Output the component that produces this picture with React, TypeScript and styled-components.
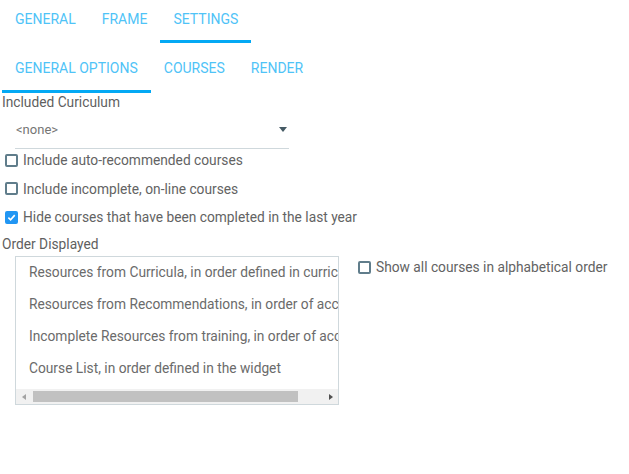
import React from "react";
import styled, { createGlobalStyle } from "styled-components";

const Global = createGlobalStyle`
  html, body { margin: 0; padding: 0; background: #ffffff; }
  body { font-family: Roboto, "Liberation Sans", Arial, sans-serif; }
  * { box-sizing: border-box; }
`;

const Page = styled.div`
  width: 629px;
  height: 474px;
  padding-left: 2px;
  overflow: hidden;
`;

const TabBar = styled.div<{ $h: number }>`
  display: flex;
  height: ${(p) => p.$h}px;
  align-items: stretch;
`;

const Tab = styled.div<{ $active?: boolean; $pt: number }>`
  padding: ${(p) => p.$pt}px 13px 0;
  font-size: 14px;
  line-height: 18px;
  text-transform: uppercase;
  color: #4fc3f7;
  border-bottom: 3px solid ${(p) => (p.$active ? "#03a9f4" : "transparent")};
  white-space: nowrap;
  cursor: pointer;
`;

const Label = styled.div<{ $mt?: number }>`
  font-size: 13.75px;
  line-height: 18px;
  color: #5f5f5f;
  margin-top: ${(p) => p.$mt ?? 0}px;
`;

const Select = styled.div`
  margin: 0 0 0 13px;
  width: 274px;
  height: 38px;
  display: flex;
  align-items: center;
  justify-content: space-between;
  padding: 0 2px 0 1px;
  border-bottom: 1px solid #cfd8dc;
  font-size: 13px;
  color: #757575;
`;

const Caret = styled.span`
  width: 0;
  height: 0;
  border-left: 4px solid transparent;
  border-right: 4px solid transparent;
  border-top: 5px solid #455a64;
`;

const CheckRow = styled.label`
  display: flex;
  align-items: center;
  height: 22px;
  gap: 5px;
  font-size: 13.75px;
  color: #636363;
  white-space: nowrap;
`;

const Box = styled.span<{ $checked?: boolean }>`
  width: 13px;
  height: 13px;
  border-radius: 2px;
  flex: none;
  border: 2px solid ${(p) => (p.$checked ? "#2196f3" : "#607d8b")};
  background: ${(p) => (p.$checked ? "#2196f3" : "#fff")};
  display: flex;
  align-items: center;
  justify-content: center;
`;

const Checks = styled.div`
  display: flex;
  flex-direction: column;
  gap: 6.5px;
  padding-left: 3px;
`;

const OrderArea = styled.div`
  display: flex;
  align-items: flex-start;
  margin-top: 3px;
  padding-left: 13px;
`;

const ListBox = styled.div`
  width: 324px;
  height: 149px;
  border: 1px solid #cfd8dc;
  display: flex;
  flex-direction: column;
`;

const Items = styled.div`
  flex: 1;
  overflow: hidden;
`;

const Item = styled.div`
  height: 32px;
  line-height: 30px;
  padding-left: 13px;
  font-size: 13.75px;
  color: #6b6b6b;
  white-space: nowrap;
  overflow: hidden;
`;

const HScroll = styled.div`
  height: 15px;
  background: #f1f1f1;
  display: flex;
  align-items: center;
`;

const ArrowBtn = styled.div<{ $dir: "left" | "right"; $disabled?: boolean }>`
  width: 15px;
  height: 15px;
  display: flex;
  align-items: center;
  justify-content: center;
  flex: none;
  &::before {
    content: "";
    width: 0;
    height: 0;
    border-top: 3.5px solid transparent;
    border-bottom: 3.5px solid transparent;
    ${(p) =>
      p.$dir === "left"
        ? `border-right: 4px solid ${p.$disabled ? "#a3a3a3" : "#505050"};`
        : `border-left: 4px solid ${p.$disabled ? "#a3a3a3" : "#505050"};`}
  }
`;

const Track = styled.div`
  flex: 1;
  height: 15px;
  display: flex;
  align-items: center;
  padding: 0 2px;
`;

const Thumb = styled.div`
  height: 11px;
  background: #c1c1c1;
`;

const Side = styled.div`
  margin-left: 19px;
`;

const Check = () => (
  <svg width="9" height="9" viewBox="0 0 10 10">
    <path d="M1.5 5.2 L4 7.6 L8.6 2.4" fill="none" stroke="#fff" strokeWidth="1.8" />
  </svg>
);

const CheckBox: React.FC<{ label: string; checked?: boolean }> = ({ label, checked }) => (
  <CheckRow>
    <Box $checked={checked}>{checked && <Check />}</Box>
    {label}
  </CheckRow>
);

const topTabs = ["General", "Frame", "Settings"];
const subTabs = ["General Options", "Courses", "Render"];
const orderItems = [
  "Resources from Curricula, in order defined in curric",
  "Resources from Recommendations, in order of acc",
  "Incomplete Resources from training, in order of acc",
  "Course List, in order defined in the widget",
];

export default function App() {
  return (
    <Page>
      <Global />
      <TabBar $h={43}>
        {topTabs.map((t) => (
          <Tab key={t} $pt={10} $active={t === "Settings"}>
            {t}
          </Tab>
        ))}
      </TabBar>
      <TabBar $h={50}>
        {subTabs.map((t) => (
          <Tab key={t} $pt={16} $active={t === "General Options"}>
            {t}
          </Tab>
        ))}
      </TabBar>
      <Label>Included Curiculum</Label>
      <Select>
        <span>&lt;none&gt;</span>
        <Caret />
      </Select>
      <Checks>
        <CheckBox label="Include auto-recommended courses" />
        <CheckBox label="Include incomplete, on-line courses" />
        <CheckBox label="Hide courses that have been completed in the last year" checked />
      </Checks>
      <Label $mt={7}>Order Displayed</Label>
      <OrderArea>
        <ListBox>
          <Items>
            {orderItems.map((i) => (
              <Item key={i}>{i}</Item>
            ))}
          </Items>
          <HScroll>
            <ArrowBtn $dir="left" $disabled />
            <Track>
              <Thumb style={{ width: `${(267 / 290) * 100}%` }} />
            </Track>
            <ArrowBtn $dir="right" />
          </HScroll>
        </ListBox>
        <Side>
          <CheckBox label="Show all courses in alphabetical order" />
        </Side>
      </OrderArea>
    </Page>
  );
}
